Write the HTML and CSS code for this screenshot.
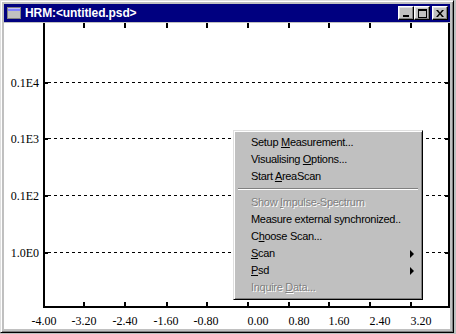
FILE: index.html
```html
<!DOCTYPE html>
<html lang="en">
<head>
  <meta charset="UTF-8">
  <title>HRM:&lt;untitled.psd&gt;</title>
  <link rel="stylesheet" href="styles.css">
</head>
<body>

  <!-- Window -->
  <div class="window">
    <div class="titlebar">
      <svg class="app-icon" width="16" height="16" viewBox="0 0 16 16">
        <rect x="1" y="2" width="14" height="12" fill="#808080"/>
        <rect x="2" y="3" width="12" height="10" fill="#ffffff"/>
        <rect x="2" y="3" width="12" height="3" fill="#8080ff"/>
        <rect x="2" y="3" width="12" height="1" fill="#c0c0ff"/>
        <rect x="2" y="6" width="12" height="7" fill="#c0c0c0"/>
      </svg>
      <span class="title">HRM:&lt;untitled.psd&gt;</span>
      <div class="caption-buttons">
        <div class="cap-btn">
          <svg width="8" height="7" viewBox="0 0 8 7"><rect x="1" y="5" width="6" height="2" fill="#000"/></svg>
        </div>
        <div class="cap-btn">
          <svg width="9" height="9" viewBox="0 0 9 9"><rect x="0" y="0" width="9" height="9" fill="#000"/><rect x="1" y="2" width="7" height="6" fill="#c0c0c0"/></svg>
        </div>
        <div class="cap-btn close">
          <svg width="8" height="7" viewBox="0 0 8 7"><path d="M0 0h2l2 2.5 2-2.5h2l-3 3.5 3 3.5h-2l-2-2.5-2 2.5h-2l3-3.5z" fill="#000"/></svg>
        </div>
      </div>
    </div>

    <!-- Plot area -->
    <div class="client">
      <svg class="chart" width="446" height="306" viewBox="4 23 446 306">
        <g fill="#000">
          <rect x="43" y="23" width="2" height="285"/>
          <rect x="43" y="306" width="407" height="2"/>
          <rect x="448" y="23" width="2" height="285"/>
        </g>
        <g id="grid" stroke="#000" stroke-width="1" stroke-dasharray="3 3" fill="none">
          <line x1="48" y1="82.5" x2="446" y2="82.5"/>
          <line x1="48" y1="138.5" x2="446" y2="138.5"/>
          <line x1="48" y1="195.5" x2="446" y2="195.5"/>
          <line x1="48" y1="252.5" x2="446" y2="252.5"/>
        </g>
        <g id="ticks" fill="#000"></g>
        <g class="ylabels">
          <text x="39" y="87">0.1E4</text>
          <text x="39" y="143">0.1E3</text>
          <text x="39" y="200">0.1E2</text>
          <text x="39" y="257">1.0E0</text>
        </g>
        <g class="xlabels">
          <text x="44" y="325">-4.00</text>
          <text x="84" y="325">-3.20</text>
          <text x="125" y="325">-2.40</text>
          <text x="166" y="325">-1.60</text>
          <text x="206" y="325">-0.80</text>
          <text x="258" y="325">0.00</text>
          <text x="299" y="325">0.80</text>
          <text x="339" y="325">1.60</text>
          <text x="380" y="325">2.40</text>
          <text x="421" y="325">3.20</text>
        </g>
      </svg>

      <!-- Context menu -->
      <div class="menu">
        <div class="item">Setup <u>M</u>easurement...</div>
        <div class="item">Visualising <u>O</u>ptions...</div>
        <div class="item">Start <u>A</u>reaScan</div>
        <div class="separator"></div>
        <div class="item disabled">Show <u>I</u>mpulse-Spectrum</div>
        <div class="item">Measure external synchronized..</div>
        <div class="item">C<u>h</u>oose Scan...</div>
        <div class="item sub"><u>S</u>can</div>
        <div class="item sub"><u>P</u>sd</div>
        <div class="item disabled">Inquire <u>D</u>ata...</div>
      </div>
    </div>
  </div>

  <script>
    // axis tick marks at each x division and each grid line
    var ticks = document.getElementById('ticks');
    var xs = [83, 124, 166, 206, 247, 288, 328, 369, 410];
    var ys = [82, 138, 195, 252];
    function tick(x, y, w, h) {
      var r = document.createElementNS('http://www.w3.org/2000/svg', 'rect');
      r.setAttribute('x', x);
      r.setAttribute('y', y);
      r.setAttribute('width', w);
      r.setAttribute('height', h);
      ticks.appendChild(r);
    }
    xs.forEach(function (x) {
      tick(x, 23, 2, 5);
      tick(x, 302, 2, 4);
    });
    ys.forEach(function (y) {
      tick(45, y, 3, 2);
      tick(445, y, 3, 2);
    });
  </script>

</body>
</html>
```

FILE: styles.css
```css
html, body {
  margin: 0;
  padding: 0;
}

body {
  background-color: #c0c0c0;
  width: 456px;
  height: 334px;
  overflow: hidden;
}

.window {
  width: 454px;
  height: 333px;
  box-sizing: border-box;
  background: #c0c0c0;
  border-top: 1px solid #dfdfdf;
  border-left: 1px solid #dfdfdf;
  border-right: 1px solid #000000;
  border-bottom: 1px solid #000000;
  box-shadow: inset 1px 1px 0 #ffffff, inset -1px -1px 0 #808080;
  padding: 3px;
  display: flex;
  flex-direction: column;
}

.titlebar {
  height: 18px;
  background: #000080;
  display: flex;
  align-items: center;
  padding: 0 2px;
  flex-shrink: 0;
}

.app-icon {
  display: block;
  margin-right: 3px;
}

.title {
  font-family: "Liberation Sans", Arial, sans-serif;
  font-size: 12px;
  font-weight: bold;
  color: #ffffff;
  flex: 1;
  letter-spacing: -0.1px;
}

.caption-buttons {
  display: flex;
  align-items: center;
}

.cap-btn {
  width: 16px;
  height: 14px;
  box-sizing: border-box;
  background: #c0c0c0;
  border-top: 1px solid #ffffff;
  border-left: 1px solid #ffffff;
  border-right: 1px solid #000000;
  border-bottom: 1px solid #000000;
  box-shadow: inset -1px -1px 0 #808080, inset 1px 1px 0 #dfdfdf;
  display: flex;
  align-items: center;
  justify-content: center;
}

.cap-btn.close {
  margin-left: 2px;
}

.client {
  position: relative;
  margin-top: 1px;
  flex: 1;
  background: #ffffff;
  overflow: hidden;
}

.chart {
  display: block;
}

.chart text {
  font-family: "Liberation Serif", "Times New Roman", serif;
  font-size: 12px;
  fill: #000000;
}

.ylabels text {
  text-anchor: end;
}

.xlabels text {
  text-anchor: middle;
}

.menu {
  position: absolute;
  left: 229px;
  top: 107px;
  width: 190px;
  box-sizing: border-box;
  background: #c0c0c0;
  border-top: 1px solid #dfdfdf;
  border-left: 1px solid #dfdfdf;
  border-right: 1px solid #000000;
  border-bottom: 1px solid #000000;
  box-shadow: inset 1px 1px 0 #ffffff, inset -1px -1px 0 #808080;
  padding: 3px;
  font-family: "Liberation Sans", Arial, sans-serif;
  font-size: 11px;
  letter-spacing: -0.3px;
  color: #000000;
}

.item {
  height: 17px;
  line-height: 17px;
  padding-left: 14px;
  position: relative;
  white-space: nowrap;
}

.item.disabled {
  color: #808080;
  text-shadow: 1px 1px 0 #ffffff;
}

.item.sub::after {
  content: "";
  position: absolute;
  right: 5px;
  top: 5px;
  border-left: 4px solid #000000;
  border-top: 4px solid transparent;
  border-bottom: 4px solid transparent;
}

.separator {
  height: 2px;
  margin: 3px 1px 4px 1px;
  border-top: 1px solid #808080;
  border-bottom: 1px solid #ffffff;
  box-sizing: border-box;
}
```
